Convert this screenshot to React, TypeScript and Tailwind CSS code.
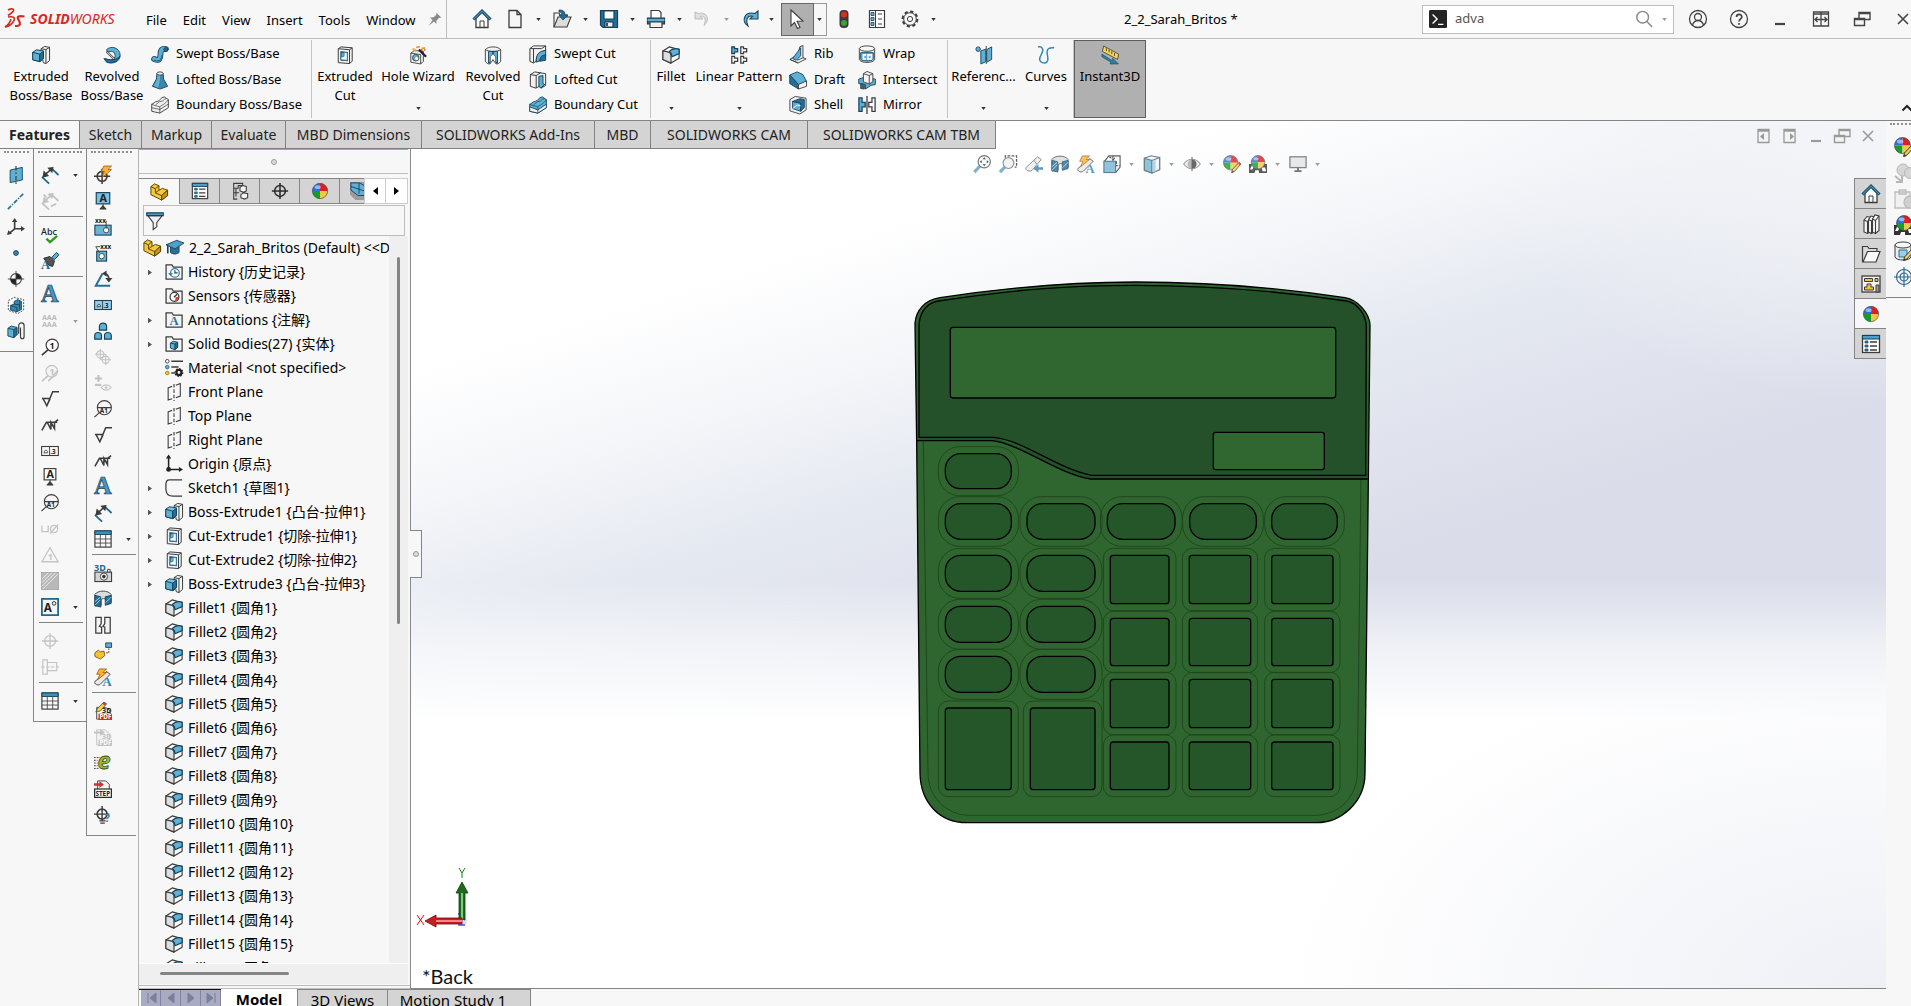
import type { ReactNode } from "react";

const K = "#3c3c3c";
const B = "#5fb0d3";
const D = "#236f97";
const G = "#c3c3c3";

const ball = (cx: number, cy: number, r: number) => (
  <g>
    <path d={`M${cx} ${cy}V${cy - r}A${r} ${r} 0 0 0 ${cx - r} ${cy}Z`} fill="#2c6fe0" />
    <path d={`M${cx} ${cy}H${cx + r}A${r} ${r} 0 0 0 ${cx} ${cy - r}Z`} fill="#dd1f1f" />
    <path d={`M${cx} ${cy}V${cy + r}A${r} ${r} 0 0 1 ${cx - r} ${cy}Z`} fill="#12a02a" />
    <path d={`M${cx} ${cy}H${cx + r}A${r} ${r} 0 0 1 ${cx} ${cy + r}Z`} fill="#efc945" />
    <circle cx={cx} cy={cy} r={r} fill="none" stroke="#444" strokeWidth="0.7" />
    <ellipse cx={cx - r * 0.3} cy={cy - r * 0.5} rx={r * 0.4} ry={r * 0.25} fill="#fff" opacity="0.5" />
  </g>
);

const pencil = (
  <g>
    <path d="M18 8l2 2-7 8-3.500 1.500 1-3.500z" fill="#f5cf45" stroke={K} strokeWidth="1" />
    <path d="M18 8l2 2-1.500 1.800-2-2z" fill="#d33" />
    <path d="M10.500 17l-1 3 3-1z" fill={K} />
  </g>
);

const folder = <path d="M1.200 18V2h6.500l1.500 2.500H19V18z" fill="#f4f4f4" stroke={K} strokeWidth="1.400" />;

const icons: Record<string, ReactNode> = {
  extrude: (
    <g stroke={K} strokeWidth="1.100">
      <path d="M10 3l4-2.500 5.500 1v14.500l-4 3.500-3-1z" fill="#f6f6f6" />
      <path d="M15.500 4v15.500M10 3l5.500 1 4-2.500" fill="none" />
      <path d="M.8 7l4-2.800 8 1.300v8L9 17.500l-8.200-2.200z" fill="#7cc3e2" stroke="#15445f" />
      <path d="M.8 7L8.500 9v8.300l-7.700-2z" fill={B} stroke="#15445f" />
      <path d="M8.500 9l4.300-3.300v8l-4.300 3.600z" fill={D} stroke="#15445f" />
    </g>
  ),
  revolve: (
    <g stroke="#15445f" strokeWidth="1">
      <path d="M4 4c5-5 15-2 15 6s-8 10-14 8l-2-4c5 3 11 1 10.500-3.500S9 5 5 7z" fill={B} />
      <path d="M1 14l3 4c6 2 12 0 15-7-4 5-11 5-18 3z" fill={D} />
      <path d="M4 6l9 9" stroke={K} strokeWidth="2.400" />
      <path d="M4.500 6.500l8 8" stroke="#fff" strokeWidth="1" />
    </g>
  ),
  sweep: (
    <g fill="none" strokeLinecap="round">
      <path d="M3.500 15.500c6 3 7-1 7-5s1-7 6-6" stroke="#15445f" strokeWidth="6.500" />
      <path d="M3.500 15.500c6 3 7-1 7-5s1-7 6-6" stroke={B} strokeWidth="4.500" />
      <path d="M4 17c5 2 8 0 8-5" stroke={D} strokeWidth="1.600" />
      <circle cx="16.500" cy="5" r="2.200" fill={D} stroke="#15445f" />
    </g>
  ),
  loft: (
    <g stroke={K}>
      <path d="M6.500 3L6 9l-4.500 8 8.500 3 8.500-3L14 9l-.5-6z" fill="#3c86ad" stroke="#15445f" />
      <path d="M7.200 4l-.5 5.500L3 16.500l5 2 2-9V4z" fill={B} stroke="none" />
      <ellipse cx="10" cy="2.800" rx="3.500" ry="1.800" fill="#f2f2f2" />
    </g>
  ),
  boundary: (
    <g stroke={K} fill="#f0f0f0">
      <path d="M.8 9c2 0 3-3 6-3s4-5 8-5l4.500 3v9l-9.500 6-9-2z" />
      <path d="M.8 9c3 2 6 2 9 3 2-2 5-2 9.500-8M9.800 12v7M5 10c2-1 3-4 6-4s3-3 6-3M.8 13l9 2 9.500-6" fill="none" strokeWidth="0.8" />
    </g>
  ),
  boundarycut: (
    <g stroke="#15445f" fill={B}>
      <path d="M.8 9c2 0 3-3 6-3s4-5 8-5l4.500 3v9l-9.500 6-9-2z" />
      <path d="M.8 12l9 3.500 9.500-6.500v4l-9.500 6-9-2z" fill="#f2f2f2" />
      <path d="M.8 9c3 2 6 2 9 3 2-2 5-2 9.500-8M9.800 12v7M5 10c2-1 3-4 6-4s3-3 6-3" fill="none" strokeWidth="0.8" />
    </g>
  ),
  cut: (
    <g stroke={K} strokeWidth="1.100">
      <path d="M2.500 3l3-2 12.500 1v15l-3 2.500-12.500-1z" fill="#f2f2f2" />
      <path d="M2.500 3L15 4.200V19.500M15 4.200l3-2.200" fill="none" />
      <path d="M5.500 6.500l7 .7v9l-7-.7z" fill={B} stroke="#15445f" strokeWidth="1.300" />
      <path d="M5.500 12.500l3.500-1V7.200l3.500.3v8.500l-7-.8z" fill="#f8f8f8" stroke={D} strokeWidth="0.8" />
    </g>
  ),
  hole: (
    <g stroke={K}>
      <path d="M2 8l4-3 10 1v11l-3 3-11-2z" fill="#f2f2f2" />
      <path d="M2 8l11 1.500V20" fill="none" />
      <circle cx="7.500" cy="13" r="3.600" fill={B} />
      <circle cx="8.500" cy="14" r="1.700" fill="#fff" stroke="none" />
      <path d="M11 4l8 8" stroke="#222" strokeWidth="2.500" />
      <path d="M8 2l2-1M14 3l4-1M4 3l2 1M11 0v2M6 6l2-2" stroke="#e8a021" strokeWidth="2" />
      <path d="M13 4l2 1M17 5l1-1" stroke="#d33" strokeWidth="1.500" />
    </g>
  ),
  revcut: (
    <g stroke={K}>
      <path d="M1.500 4c3-4 14-4 17 0v13c-2 3-4 3-5 3V12L10 8l-3.500 4v8c-2 0-4-1-5-3z" fill="#f2f2f2" />
      <path d="M1.500 4c2 1.500 5 2 8.500 2s6.500-.5 8.500-2" fill="none" />
      <path d="M5 6v13l5-3V6zM15 6v13l-5-3V6z" fill={B} stroke="#15445f" />
      <path d="M7 19.500V12l3-3.500 3 3.500v7.500L10 15z" fill="#fff" strokeWidth="0.800" />
    </g>
  ),
  sweepcut: (
    <g stroke={K} strokeWidth="1.100">
      <path d="M1 4l4-3h13.500v5.500C11 7 8 12 8 18l-3 2-4-2z" fill="#f2f2f2" />
      <path d="M1 4h13M5 4v15.500M14 4l4.500-3" fill="none" />
      <path d="M8 19c0-8 2-12 10.500-13v6c-4 1-5 3-5 5z" fill={B} stroke="#15445f" />
      <path d="M12 18c0-4 2-7 6.500-7v6z" fill={D} stroke="#15445f" />
    </g>
  ),
  loftcut: (
    <g stroke={K} strokeWidth="1.100">
      <path d="M1.500 4l5-3 12 2v13l-5 3-2-2-4 2-6-2z" fill="#f2f2f2" />
      <path d="M1.500 4L8 5v14M8 5l5-3" fill="none" />
      <path d="M11 6l4.500-1v9l2 1-4.500 4-2-2z" fill={B} stroke="#15445f" />
    </g>
  ),
  fillet: (
    <g stroke={K} strokeWidth="1.300" strokeLinejoin="round">
      <path d="M1 5.500L8 1l11 3v9.500L10 19l-9-4z" fill="#fafafa" />
      <path d="M10 19v-8.500c0-3-2-4-9-5V15z" fill="#dedede" />
      <path d="M8 6c3-3 6-4 11-2.500v5L11 12c0-3-1-5-3-6z" fill={B} stroke="#15445f" />
    </g>
  ),
  pattern: (
    <g strokeWidth="1.400" stroke={K} fill="#fff">
      <path d="M2 1h3v2h3.500v3.500H5v2H2z" fill={B} stroke="#15445f" />
      <path d="M12 1h3v2h3.500v3.500H15v2h-3zM2 11.500h3v2h3.500V17H5v2H2zM12 11.500h3v2h3.500V17H15v2h-3z" />
    </g>
  ),
  rib: (
    <g stroke={K}>
      <path d="M12 2l3.500-1.500V14l3.500 1.500-9 4.500-9-4 3-2 6-3z" fill="#f2f2f2" />
      <path d="M4 15L13 3v9l-5 5z" fill={B} stroke="#15445f" />
      <path d="M1 16l9 4M9 17l7-3" fill="none" />
    </g>
  ),
  draft: (
    <g stroke="#15445f">
      <path d="M.8 4.500L9 1l6.500 3L19.500 12l-9 3z" fill={B} />
      <path d="M.8 4.500L10.500 15v5L.8 14z" fill={D} />
      <path d="M10.500 15l9-4v6l-9 3z" fill="#f2f2f2" stroke={K} />
    </g>
  ),
  shell: (
    <g stroke={K}>
      <path d="M1 4l6-3.500 12 2v13L12 20 1 16.500z" fill="#f2f2f2" />
      <path d="M4 6l9 2v9l-9-3z" fill={B} stroke="#15445f" />
      <path d="M4 6l8-3 5 1v9l-4 4V8z" fill={D} stroke="#15445f" />
      <path d="M4 14l5-4 4 1" fill="none" stroke="#fff" />
    </g>
  ),
  wrap: (
    <g stroke={K}>
      <path d="M1.500 4v12c1 4.500 16 4.500 17 0V4" fill="#f2f2f2" />
      <ellipse cx="10" cy="4" rx="8.500" ry="3" fill="#f7f7f7" />
      <path d="M3 8.500h14V16c-3 2.500-11 2.500-14 0z" fill={B} stroke="#15445f" />
      <path d="M9 11H6v4.500h3M11 11h4v4.500h-4z" fill="none" stroke="#fff" strokeWidth="1.800" />
    </g>
  ),
  intersect: (
    <g stroke={K}>
      <path d="M.8 9l6-2 12.500 2v6l-5 1-6 4v-5l-7.500-1z" fill={B} stroke="#15445f" />
      <path d="M6 3l4-2.500L16.500 3v9l-4 2.500L6 12z" fill="#f4f4f4" />
      <path d="M6 3l6.500 2v9.500M12.500 5l4-2" fill="none" />
      <path d="M3 19.500V14l4 1v5z" fill={D} />
    </g>
  ),
  mirror: (
    <g strokeWidth="1.400">
      <path d="M1 2h3.500v5h3.500v5H4.500v5H1z" fill={B} stroke="#15445f" />
      <path d="M19 2h-3.500v5H12v5h3.500v5H19z" fill="#fff" stroke={K} />
      <path d="M10 0v20" stroke={K} />
    </g>
  ),
  refgeo: (
    <g stroke="#15445f">
      <circle cx="3.500" cy="3.500" r="2.500" fill={B} />
      <path d="M6.500 5.500l5.500-2v14l-5.500 2.500zM13 4l5.500-3v14L13 18z" fill={B} />
      <path d="M12.500 0v20" stroke={K} strokeDasharray="4 2" />
    </g>
  ),
  curves: (
    <path d="M1 1c5-1 7 3 4 8s-3 8 1 9.500 7-1 6-6S9 1 19 2" fill="none" stroke="#2f86b0" strokeWidth="1.600" />
  ),
  instant: (
    <g>
      <path d="M3 0l16.500 9-1 6L1.500 6z" fill="#f7d654" stroke={K} strokeWidth="0.900" />
      <path d="M6 2.500v3M9 4v3M12 6v3M15 8v3" stroke={K} />
      <path d="M1 9l11 7 1-2.500 6.500 6.500H10l1-2L1 12z" fill="#2c7ba5" stroke="#15445f" strokeWidth="0.600" />
    </g>
  ),
  home: (
    <g>
      <path d="M4 9v9.500h12V9l-6-6z" fill="#fafafa" stroke={K} strokeWidth="1.300" />
      <path d="M8 18v-6h4v6" fill="none" stroke={K} />
      <path d="M1.500 10.500L10 2l8.500 8.500" fill="none" stroke="#17415a" strokeWidth="3" />
      <path d="M1.500 10.500L10 2l8.500 8.500" fill="none" stroke="#3c92bf" strokeWidth="1.200" />
    </g>
  ),
  newdoc: <path d="M4 1.500h8l4 4v13H4zM12 1.500v4h4" fill="#f6f6f6" stroke={K} strokeWidth="1.300" />,
  open: (
    <g stroke={K} strokeWidth="1.100">
      <path d="M2 18V4h5l1 2h7v3" fill="#f6f6f6" />
      <path d="M2 18L6 8h13l-4 10z" fill="#dcdcdc" />
      <path d="M7 1c4 0 6 1 6 5h3l-5 5-4-5h3c0-2-1-3-3-3z" fill={D} stroke="#15445f" strokeWidth="0.800" />
    </g>
  ),
  save: (
    <g stroke="#17415a" strokeWidth="1.200">
      <path d="M1.500 1.500h17v17H4l-2.500-2.500z" fill={D} />
      <path d="M5 2h10v8H5z" fill="#fff" />
      <path d="M6 13h8v5H6z" fill="#f0f0f0" />
      <path d="M8 14v3" stroke={K} strokeWidth="1.800" />
    </g>
  ),
  print: (
    <g stroke={K} strokeWidth="1.200">
      <path d="M5 9V1.500h8l2 2V9" fill="#fff" />
      <path d="M1.500 9h17v6h-17z" fill={D} stroke="#17415a" />
      <path d="M4 13h12v5.500H4z" fill="#f0f0f0" />
      <path d="M1.500 11h17" stroke="#9ad0e8" />
    </g>
  ),
  undo: <path d="M2 3v7h8L7 7.500c4-1 7 2 4 9 6-5 4-14-6-12z" fill="#e0e0e0" stroke="#bdbdbd" />,
  redo: <path d="M18 2v8h-8l2.500-2.800C8 6 5 10 8 17 1 12 4 2 15 4.500z" fill={B} stroke="#15445f" strokeWidth="1.100" />,
  pointer: <path d="M4 1l12 11-6 .3 3 6-2.500 1.200-3-6L4 17z" fill="#fff" stroke={K} strokeWidth="1.100" />,
  light: (
    <g>
      <rect x="5.500" y="1" width="9" height="18" rx="4" fill="#3a3a3a" />
      <circle cx="10" cy="5.500" r="3" fill="#d8301e" />
      <circle cx="10" cy="14" r="3" fill="#3ea03a" />
    </g>
  ),
  list: (
    <g stroke={K}>
      <path d="M2.500 1.500h15v17h-15z" fill="#fff" strokeWidth="1.200" />
      <path d="M8.500 2v16M11 5h4M11 10h4M11 15h4" />
      <path d="M4 3.500h3v3H4zM4 8.500h3v3H4zM4 13.500h3v3H4z" fill={B} stroke="#15445f" strokeWidth="0.800" />
    </g>
  ),
  gear: (
    <g fill="none" stroke={K}>
      <circle cx="10" cy="10" r="7.400" strokeWidth="2" strokeDasharray="3.300 2.500" />
      <circle cx="10" cy="10" r="6.300" />
      <circle cx="10" cy="10" r="2.600" />
    </g>
  ),
  pin: <path d="M12 1l7 7-3.500.5-3.500 4V17l-3.500-3.500L1 19.500 6.500 11.500 3 8l5-.5L12 4z" fill="#8a8a8a" />,
  search: (
    <g fill="none" stroke="#8a8a8a" strokeWidth="1.600">
      <circle cx="8.500" cy="8" r="6.500" />
      <path d="M13 12.500l6 6.500" />
    </g>
  ),
  user: (
    <g fill="none" stroke="#444" strokeWidth="1.300">
      <circle cx="10" cy="10" r="8.500" />
      <circle cx="10" cy="8" r="3.500" />
      <path d="M4.500 16c1-3 3-4.500 5.500-4.500s4.500 1.500 5.500 4.500" />
    </g>
  ),
  help: (
    <g fill="none" stroke="#444" strokeWidth="1.300">
      <circle cx="10" cy="10" r="8.500" />
      <path d="M7.500 8c0-3.500 5.500-3.500 5.300 0 0 2-2.700 2-2.700 4.500M10 14v1.700" strokeWidth="1.700" />
    </g>
  ),
  min: <path d="M5 15h10" stroke="currentColor" strokeWidth="2.200" />,
  span: (
    <path
      d="M2.500 3h15v14h-15zM2.500 5h15M10 3v14M4 10.500h12M6.500 8L4 10.500 6.500 13M13.500 8l2.500 2.500-2.500 2.500"
      fill="none"
      stroke="currentColor"
      strokeWidth="1.300"
    />
  ),
  restore: (
    <path d="M7 9V3.500h11v7h-5M2.500 9.500h10v7h-10zM7 4.500h11M2.500 10.500h10" fill="none" stroke="currentColor" strokeWidth="1.400" />
  ),
  close: <path d="M5 5l10 10M15 5L5 15" stroke="currentColor" strokeWidth="1.600" />,
  prevdoc: (
    <g fill="none" stroke="currentColor" strokeWidth="1.300">
      <path d="M4 3.500h11v13H4zM4 5h11" />
      <path d="M10 7v7l-4-3.500z" fill="currentColor" stroke="none" />
    </g>
  ),
  nextdoc: (
    <g fill="none" stroke="currentColor" strokeWidth="1.300">
      <path d="M4 3.500h11v13H4zM4 5h11" />
      <path d="M10 7v7l4-3.500z" fill="currentColor" stroke="none" />
    </g>
  ),
  plane3: (
    <g stroke="#15445f">
      <path d="M3.500 4.500L17 1.500v14l-13.500 3z" fill={B} />
      <path d="M10 0v20" stroke={K} strokeWidth="1.300" strokeDasharray="5 2 2 2" />
    </g>
  ),
  axis: <path d="M1 19L19 1" stroke={D} strokeWidth="1.800" strokeDasharray="5 1.500 1.500 1.500" />,
  coord: (
    <g stroke={K} fill="none" strokeWidth="1.800">
      <path d="M8.500 12V3M8.500 12h9M8.500 12l-6 5" />
      <path d="M8.500 0l3 4.500h-6zM20 12l-4.500-3v6zM0 19l1.500-5.500 4 4z" fill={K} stroke="none" />
    </g>
  ),
  point: <circle cx="10" cy="10" r="2.700" fill="#3b85ad" stroke="#17415a" />,
  com: (
    <g>
      <circle cx="10" cy="10" r="6" fill="#fff" stroke={K} strokeWidth="1.200" />
      <path d="M10 10V4a6 6 0 0 1 6 6zM10 10v6a6 6 0 0 1-6-6z" fill="#222" />
      <path d="M10 1v18M1 10h18" stroke={K} />
    </g>
  ),
  bbox: (
    <g>
      <path d="M1.500 5L8 1.500l10.500 2.500v11.500L12 19.500 1.500 16z" fill="none" stroke={K} strokeDasharray="2 1.500" />
      <path d="M4 10.500l4-1.500V6l4-2 4 2v9l-5 2.500L4 15.500z" fill="#3c86ad" stroke="#15445f" />
      <path d="M4 10.500l7 2.500v4M8 9l6 1M14 6v9" stroke="#15445f" fill="none" />
    </g>
  ),
  mate: (
    <g stroke="#15445f">
      <path d="M1 7l3.500-2.500L11 6v8l-3.500 3.500-6.500-2z" fill={B} />
      <path d="M7.500 8.500L11 6v8l-3.500 3.500z" fill={D} />
      <path d="M1 7l6.500 1.500" />
      <path d="M13 13V4c0-4 6-4 6 0v12c0 3.500-4 3.500-4 0V6" fill="none" stroke={K} strokeWidth="1.300" />
    </g>
  ),
  dim: (
    <g stroke="#1f6a94" fill="none" strokeWidth="2">
      <path d="M1 12l8 7.500M11 2l8.500 8" />
      <path d="M4 10l7-6" stroke={K} strokeWidth="1.800" />
      <path d="M1.500 13l1.500-8 6 6zM14 1L7 2l5.500 6z" fill={K} stroke="none" />
    </g>
  ),
  dimgray: (
    <g stroke={G} fill="none" strokeWidth="2">
      <path d="M1 12l8 7.500M11 2l8.500 8M4 10l7-6M3 3l3 3M17 13l-6 3" />
      <path d="M1.500 13l1.500-8 6 6zM14 1L7 2l5.500 6z" fill={G} stroke="none" />
    </g>
  ),
  spell: (
    <g>
      <text x="0" y="10" fontSize="10" fontWeight="500" fill="#222">Abc</text>
      <path d="M6 14l4 4 8-7" fill="none" stroke="#2c9b1d" strokeWidth="2.600" />
    </g>
  ),
  brush: (
    <g>
      <path d="M12 6l5-5.500 3 2.500-5 5.500z" fill={B} stroke="#15445f" />
      <path d="M3 7l7-2 5 5-2 6-4-1z" fill="#555" stroke="#222" />
      <text x="0" y="19" fontSize="14" fontWeight="700" fill="#1f6a94" fontFamily="Liberation Serif">A</text>
    </g>
  ),
  noteA: (
    <text x="0" y="18" fontSize="27" fontWeight="700" fill="#4a97c2" stroke="#17415a" strokeWidth="0.800" fontFamily="Liberation Serif">A</text>
  ),
  aaa: (
    <g fill="#bdbdbd" fontSize="8" fontWeight="700">
      <text x="1" y="9">AAA</text>
      <text x="1" y="17">AAA</text>
    </g>
  ),
  balloon: (
    <g>
      <circle cx="12.500" cy="8" r="6.800" fill="#fff" stroke={K} strokeWidth="1.300" />
      <path d="M8 13l-7 6" stroke={K} strokeWidth="1.900" />
      <text x="9.500" y="12" fontSize="10" fontWeight="700" fill="#222">1</text>
    </g>
  ),
  balloongray: (
    <g>
      <circle cx="12" cy="8" r="6.500" fill="#f3f3f3" stroke={G} strokeWidth="1.300" />
      <path d="M8 13l-7 6M13 14l5-6M8 19l5-5" stroke={G} strokeWidth="1.800" />
      <text x="9.500" y="12" fontSize="10" fontWeight="700" fill={G}>1</text>
    </g>
  ),
  finish: <path d="M1 9.500h9M2.500 10l4 7.500L13 2h7M6.500 17.500L10 10" fill="none" stroke={K} strokeWidth="1.700" />,
  weld: <path d="M1 16l5-9h12M7 7l4 8V7l4 7V7M14 8l5-4" fill="none" stroke={K} strokeWidth="1.700" />,
  gtol: (
    <g>
      <rect x="0.700" y="5" width="18.600" height="10" fill="#f6f6f6" stroke={K} strokeWidth="1.200" />
      <path d="M9.500 5v10M3 12h4.500M3.500 11.500c0-3 4-3 4 0" stroke={K} fill="none" />
      <text x="10.200" y="13" fontSize="7" fontWeight="700" fill="#222">.3</text>
    </g>
  ),
  gtolblue: (
    <g>
      <rect x="0.700" y="5" width="18.600" height="10" fill="#9bd0e8" stroke="#17415a" strokeWidth="1.200" />
      <path d="M9.500 5v10M3 12h4.500M3.500 11.500c0-3 4-3 4 0" stroke={K} fill="none" />
      <text x="10.200" y="13" fontSize="7" fontWeight="700" fill="#222">.3</text>
    </g>
  ),
  datum: (
    <g>
      <rect x="3.500" y="0.700" width="13" height="12.500" fill="#fff" stroke={K} strokeWidth="1.300" />
      <text x="6" y="11" fontSize="12" fontWeight="700" fill="#222">A</text>
      <path d="M10 13v4M6.500 19h7L10 15z" fill={K} stroke={K} />
    </g>
  ),
  datumblue: (
    <g>
      <rect x="2.500" y="0.700" width="15" height="12.500" fill="#7cc0de" stroke="#17415a" strokeWidth="1.300" />
      <text x="6" y="11" fontSize="12" fontWeight="700" fill="#222">A</text>
      <path d="M10 13v4M6.500 19h7L10 15z" fill={K} stroke={K} />
    </g>
  ),
  target: (
    <g>
      <circle cx="11.500" cy="8.500" r="7.800" fill="#f6f6f6" stroke={K} strokeWidth="1.200" />
      <path d="M4 8.500h15M6 14l-5.500 5" stroke={K} strokeWidth="1.300" />
      <text x="6.500" y="14.500" fontSize="7" fontWeight="700" fill="#222">A1</text>
    </g>
  ),
  hole2: (
    <g fill="none" stroke={G} strokeWidth="1.400">
      <path d="M1 6v7h7V6" />
      <circle cx="14.500" cy="10" r="4" />
      <path d="M10 15l9-10" />
    </g>
  ),
  rev: (
    <g fill="none" stroke={G} strokeWidth="1.400">
      <path d="M10 2l9 15.500H1z" />
      <text x="7.500" y="15.500" fontSize="10" fontWeight="700" fill={G} stroke="none">1</text>
    </g>
  ),
  hatch: (
    <g>
      <rect x="0.500" y="0.500" width="19" height="19" fill="#b9b9b9" stroke="#a9a9a9" />
      <path d="M1 12L12 1M1 16L16 1M1 8l7-7M2 19L19 2" stroke="#ededed" />
    </g>
  ),
  block: (
    <g>
      <rect x="1" y="1" width="18" height="18" fill="#f4f4f4" stroke="#1f6a94" strokeWidth="2" />
      <text x="3" y="15.500" fontSize="13" fontWeight="700" fill="#222">A</text>
      <circle cx="14.500" cy="6" r="2" fill="none" stroke="#222" />
    </g>
  ),
  center: (
    <g fill="none" stroke={G} strokeWidth="1.400">
      <circle cx="10" cy="10" r="6" />
      <path d="M10 1v18M1 10h18" />
    </g>
  ),
  cline: (
    <g fill="none" stroke={G} strokeWidth="1.300">
      <path d="M2 2h5v16H2zM7 5h10.500v9H7z" />
      <path d="M0 10h20" strokeDasharray="4 1.500" />
    </g>
  ),
  table: (
    <g>
      <rect x="1" y="1" width="18" height="18" fill="#f8f8f8" stroke={K} strokeWidth="1.300" />
      <path d="M1 1h18v4H1z" fill="#3b8fbb" stroke="#17415a" />
      <path d="M1 10h18M1 14.500h18M7 5v14M13 5v14" stroke={K} strokeWidth="0.900" />
    </g>
  ),
  autodim: (
    <g>
      <circle cx="9" cy="11.500" r="5.500" fill="none" stroke={K} strokeWidth="1.800" />
      <path d="M9 3v17M0 11.500h18" stroke={K} strokeWidth="1.700" />
      <path d="M11 0h8.500l-4 4h4L9 13l2.500-7H8z" fill="#f7b52d" stroke="#9a4b10" strokeWidth="0.800" />
    </g>
  ),
  sizedim: (
    <g>
      <text x="1" y="5" fontSize="7" fontWeight="700" fill="#222">xxx</text>
      <rect x="1" y="8" width="18" height="11" fill="#6bb4d6" stroke="#17415a" strokeWidth="1.200" />
      <circle cx="13.500" cy="13.500" r="3" fill="#fff" stroke={K} />
      <path d="M13.500 12V3" stroke={K} fill="none" />
    </g>
  ),
  locdim: (
    <g>
      <text x="7" y="5" fontSize="7" fontWeight="700" fill="#222">xxx</text>
      <rect x="3" y="8" width="11" height="11" fill="#6bb4d6" stroke="#17415a" strokeWidth="1.200" />
      <circle cx="8.500" cy="13.500" r="3" fill="#fff" stroke={K} />
      <path d="M6 10L2 3h5" stroke={K} fill="none" />
    </g>
  ),
  angdim: (
    <g fill="none">
      <path d="M9.500 4L2 17.500h16" stroke={D} strokeWidth="2.200" />
      <path d="M11 4c4 0 5.500 3 5.500 7" stroke={K} strokeWidth="1.800" />
      <path d="M9 4l5-3.500v7zM16.500 14L12.500 9h8z" fill={K} />
    </g>
  ),
  patfeat: (
    <path
      d="M6 9V5c0-5 8-5 8 0v4zM.8 19v-4c0-4.500 7.500-4.500 7.500 0v4zM11.700 19v-4c0-4.500 7.500-4.500 7.500 0v4z"
      fill={B}
      stroke="#17415a"
      strokeWidth="1.300"
    />
  ),
  centgray: (
    <g fill="none" stroke={G} strokeWidth="1.200">
      <circle cx="7" cy="7" r="4" />
      <circle cx="13" cy="13" r="4" />
      <path d="M7 1v12M1 7h12M13 7v12M7 13h12" />
    </g>
  ),
  showtol: (
    <g fill="none" stroke={G} strokeWidth="2.400">
      <path d="M5 1v8M1 5h8M1 12h7" />
      <path d="M8 15c3-4 8-4 11 0-3 4-8 4-11 0z" strokeWidth="1.300" />
      <circle cx="13.500" cy="15" r="1.500" fill={G} stroke="none" />
    </g>
  ),
  cam3d: (
    <g>
      <text x="0" y="8" fontSize="10" fontWeight="700" fill="#1f6a94">3D</text>
      <rect x="1" y="9" width="18.500" height="10.500" fill="#d4d4d4" stroke={K} strokeWidth="1.200" />
      <path d="M15 6h3v3h-3z" fill="#eee" stroke={K} />
      <circle cx="11" cy="14" r="4" fill="#f4f4f4" stroke={K} />
      <circle cx="11" cy="14" r="2" fill="#333" />
    </g>
  ),
  section: (
    <g stroke="#17415a">
      <path d="M1 5c3-5 15-5 18 0v9l-5 1v-4c-2-2-5-2-6 0v6l-7 1z" fill="#d9dde0" stroke={K} />
      <path d="M1 6l6.500 1.500v11.500L1 17zM12.500 7.500L19 6v9l-6.500 2z" fill={D} />
      <path d="M1 13l6-5M1 17l6-6M13 14l6-6" stroke="#a8d7ec" />
    </g>
  ),
  breakv: (
    <path d="M2 1.500h6v7l-2 3 2.500 1V19H2zM18 1.500h-6v7l-2 3 2 1V19h6z" fill="#f4f4f4" stroke={K} strokeWidth="1.400" />
  ),
  modelitem: (
    <g>
      <path d="M1 12l4-3 2 2 4-1 1 5-5 4-6-3z" fill="#f2c230" stroke="#7a5a10" />
      <path d="M13 1h6.500v5H13z" fill={B} stroke="#17415a" />
      <path d="M16.500 7v5h-4" stroke={K} fill="none" strokeDasharray="2 1" />
    </g>
  ),
  annview: (
    <g>
      <path d="M1 15L14 4l4 3L7 18c-3 2-7 0-6-3z" fill="#e8e8e8" stroke={K} />
      <path d="M6 1h8l-4 4h4L4 13l2.500-6H3z" fill="#f7b52d" stroke="#9a4b10" strokeWidth="0.800" />
      <text x="9.500" y="19.500" fontSize="14" fontWeight="700" fill="#2f86b0" fontFamily="Liberation Serif">A</text>
    </g>
  ),
  pdf: (
    <g>
      <path d="M3 6h10l5 4v9H3z" fill="#f6f6f6" stroke={K} />
      <text x="9" y="12" fontSize="8" fontWeight="700" fill="#222">3D</text>
      <path d="M2 11l2-4 7-7 3 2-7 8z" fill="#f5cf45" stroke={K} strokeWidth="0.800" />
      <path d="M11 0l3 2-2 2-3-2z" fill="#d33" />
      <rect x="5" y="13" width="15" height="7" fill="#e32219" />
      <text x="6" y="19" fontSize="7" fontWeight="700" fill="#fff">PDF</text>
    </g>
  ),
  pdfgray: (
    <g>
      <path d="M3 2h9l5 4v13H3z" fill="#f2f2f2" stroke={G} />
      <path d="M0 4h7V1l5 4-5 4V6H0z" fill={G} />
      <text x="9" y="12" fontSize="8" fontWeight="700" fill={G}>3D</text>
      <rect x="5" y="13" width="15" height="7" fill={G} />
      <text x="6" y="19" fontSize="7" fontWeight="700" fill="#fff">PDF</text>
    </g>
  ),
  edraw: (
    <g>
      <path d="M0 4h7M0 7h4M0 10h4M0 13h4M0 16h6" stroke={K} strokeDasharray="2 1" />
      <text x="4" y="17" fontSize="26" fontWeight="700" fontStyle="italic" fill="#9cb93a" stroke="#3e5212" strokeWidth="0.900">e</text>
    </g>
  ),
  step: (
    <g>
      <path d="M4 1h9l4 4v6H4z" fill="#f6f6f6" stroke={K} />
      <path d="M0 3.500h6V1l5 4-5 4V6.500H0z" fill="#d23030" />
      <rect x="0.700" y="10" width="18.600" height="9.300" fill="#f8f8f8" stroke="#222" strokeWidth="1.300" />
      <text x="1.700" y="17.300" fontSize="7" fontWeight="700" fill="#222">STEP</text>
    </g>
  ),
  dimhelp: (
    <g>
      <circle cx="9" cy="9" r="5.500" fill="none" stroke={K} strokeWidth="1.800" />
      <path d="M9 0v16M0 9h17M6 16.500h7M7 19h5" stroke={K} strokeWidth="1.600" />
      <text x="12" y="18" fontSize="12" fontWeight="700" fill="#2f86b0">?</text>
    </g>
  ),
  part: (
    <g stroke="#5c4508" strokeWidth="1.100" strokeLinejoin="round">
      <path d="M1 4l4-3 5 2v5l4-2 5.500 2v6L13 19 1 13z" fill="#f4c838" />
      <path d="M1 4l5 2.500V11l7 3v5M6 6.500L10 3M13 14l6.500-6M6 11l4-3" fill="none" />
      <path d="M13 14l6.500-6v6L13 19z" fill="#c8941a" />
    </g>
  ),
  cap: (
    <g stroke="#17415a">
      <path d="M5 8v7c3 2.500 7 2 9.500 0V8z" fill="#2c6f97" />
      <path d="M0 6.500L12 1.500l8 3L10 11z" fill="#4fa0c8" />
      <path d="M2 7v9" strokeWidth="1.800" />
    </g>
  ),
  props: (
    <g>
      <rect x="1.500" y="1.500" width="17" height="17" fill="#fff" stroke={K} strokeWidth="1.300" />
      <path d="M1.500 1.500h17v3.500h-17z" fill="#4ba0ca" stroke="#17415a" />
      <path d="M9 8h7M9 12h7M9 16h7" stroke={K} strokeWidth="1.300" />
      <path d="M4 7h3v2H4zM4 11h3v2H4zM4 15h3v2H4z" fill="#2f86b0" stroke="#17415a" strokeWidth="0.700" />
    </g>
  ),
  config: (
    <g stroke={K} fill="#f4f4f4" strokeWidth="1.200">
      <path d="M3 1.500h10V4H8v3H3zM3 7v12h4M3 12h6M5.500 7v9" fill="none" />
      <path d="M10 6l3-2 4 1v5l-3 1.500-4-1.500zM11 14l3-2 4.500 1v4.500L15 19l-4-1.500z" />
    </g>
  ),
  crosshair: (
    <g fill="none" stroke="#2b2b2b" strokeWidth="1.700">
      <circle cx="10" cy="10" r="6" />
      <path d="M10 1v18M1 10h18" />
    </g>
  ),
  ball: ball(10, 10, 8.500),
  cubeblue: (
    <g stroke="#17415a">
      <path d="M0 0h20v20H6L0 14z" fill="#9b9b9b" stroke="none" />
      <path d="M1 1h10l8 5v9H9L1 9z" fill={B} />
      <path d="M10 1v12M1 5l18 6" />
    </g>
  ),
  funnel: (
    <g stroke={K} strokeWidth="1.200">
      <path d="M2 4l6 8v7.500l4-3V12l6-8z" fill="#f0f0f0" />
      <path d="M.8 1h18.400v3H.8z" fill="#4ba0ca" stroke="#17415a" />
    </g>
  ),
  fhist: (
    <g>
      {folder}
      <circle cx="11" cy="11" r="4.800" fill="#fff" stroke="#2f86b0" strokeWidth="1.400" />
      <path d="M11 8v3h3" stroke={K} fill="none" strokeWidth="1.300" />
      <path d="M3.500 11h5.500L6 14.500z" fill="#2f86b0" />
    </g>
  ),
  fsens: (
    <g>
      {folder}
      <circle cx="10.500" cy="11" r="4.900" fill="#fff" stroke={K} strokeWidth="1.400" />
      <path d="M10 11.500l3.500-3.500" stroke={K} strokeWidth="1.600" />
      <path d="M11 15.500a4.500 4.500 0 0 0 4-4.500h-3z" fill="#e2401c" />
    </g>
  ),
  fann: (
    <g>
      {folder}
      <text x="5" y="16" fontSize="14" fontWeight="700" fill="#2f6f97" fontFamily="Liberation Serif">A</text>
    </g>
  ),
  fsolid: (
    <g>
      {folder}
      <path d="M6 9l3-2 5 1v5.500l-3 3-5-2z" fill="#5fb0d3" stroke="#17415a" />
      <path d="M11 10l3-2v5.500l-3 3z" fill="#236f97" stroke="#17415a" />
      <path d="M6 9l5 1" fill="none" stroke="#17415a" />
    </g>
  ),
  material: (
    <g>
      <path d="M7 2.500h13M7 9h8M7 15.500h4" stroke={K} strokeWidth="1.700" />
      <circle cx="2.500" cy="2.500" r="2" fill="#fff" stroke={K} />
      <circle cx="2.500" cy="9" r="2" fill={B} stroke={D} />
      <circle cx="2.500" cy="15.500" r="2" fill="#f2c230" stroke="#a9801a" />
      <circle cx="15.500" cy="15" r="2.800" fill="none" stroke="#222" strokeWidth="2.500" />
      <circle cx="15.500" cy="15" r="4.300" fill="none" stroke="#222" strokeWidth="1.300" strokeDasharray="1.800 1.500" />
    </g>
  ),
  plane: (
    <g fill="none" stroke={K} strokeWidth="1.200">
      <path d="M8 3.500l-4.500 2v13.500l4.500-1.500M12 2.500l5-2v14l-5 2" />
      <path d="M10 1v19" strokeDasharray="4 2" />
    </g>
  ),
  origin: (
    <g stroke="#222" strokeWidth="1.700" fill="none">
      <path d="M4 3v13h13" />
      <path d="M4-.5L7 4H1zM20 16l-4.500-2.800v5.600z" fill="#222" stroke="none" />
      <circle cx="4" cy="16" r="1.800" fill="#222" />
    </g>
  ),
  sketch: <path d="M19 1H5C2 1 1 3 1 6v5c0 5 3 8 8 8h10" fill="none" stroke={K} strokeWidth="1.400" />,
  zoomfit: (
    <g>
      <path d="M8 12l-6.500 7" stroke="#5d9fc0" strokeWidth="3.500" />
      <circle cx="12.500" cy="7.500" r="6.800" fill="#f6f8fa" stroke="#555" strokeWidth="1.300" />
      <path d="M12.500 2.500l1.800 2.200h-3.600zM12.500 12.500l1.800-2.200h-3.600zM7.500 7.500l2.200-1.800v3.600zM17.500 7.500l-2.200-1.800v3.600z" fill="#222" />
    </g>
  ),
  zoomarea: (
    <g>
      <path d="M7 3V1h12.500v12.500h-2" fill="none" stroke="#333" strokeWidth="1.400" strokeDasharray="3 1.500" />
      <path d="M7 13l-6 6" stroke="#5d9fc0" strokeWidth="3.500" />
      <circle cx="10.500" cy="9" r="6" fill="#eef2f4" stroke="#777" strokeWidth="1.300" />
    </g>
  ),
  prevview: (
    <g>
      <path d="M1 14L14 2l4 3L8 17c-3 2-8 0-7-3z" fill="#ececec" stroke="#666" />
      <path d="M10 6l3 4" stroke="#666" />
      <path d="M20 13.500h-5v-3L9 15l6 4.500v-3h5z" fill="#3a82a8" />
    </g>
  ),
  orient: (
    <g stroke="#333" strokeWidth="1.200">
      <path d="M1.500 7l5-6h12.500v12.500l-5 6" fill="#f8f8f8" />
      <path d="M11 1v6M15 7v5h4M13 3l-2 3M7 2l4 3" fill="none" strokeDasharray="3 1" />
      <rect x="1" y="7" width="13" height="12.500" fill="#76b5d3" stroke="#2b5f7a" />
    </g>
  ),
  display: (
    <g stroke="#3f5f6e" strokeWidth="1.200">
      <path d="M1.500 3.500L9 .8l9.500 2v13.500L10 20l-8.500-3z" fill="#f3f6f8" />
      <path d="M1.500 3.500L10 6v14l-8.500-3z" fill="#76b5d3" />
      <path d="M10 6l8.500-3.200v13.500L10 20z" fill="#f0f4f6" />
      <path d="M10.600 6.500l3.400-1.500v13l-3.400 1.300z" fill="#9bcbe0" stroke="none" />
    </g>
  ),
  eye: (
    <g>
      <path d="M.8 10c5-7 13.400-7 18.400 0-5 7-13.400 7-18.400 0z" fill="#eee" stroke="#888" strokeWidth="1.300" />
      <circle cx="10" cy="10" r="5" fill="#aaa" />
      <path d="M10 5a5 5 0 0 1 0 10z" fill="#444" />
      <path d="M10 2v16" stroke="#444" />
    </g>
  ),
  appear: (
    <g>
      {ball(8.500, 8.500, 8)}
      {pencil}
    </g>
  ),
  scene: (
    <g>
      <path d="M0 10h20v10H0z" fill="#333" />
      <path d="M3 12h3l-2 4H1zM14 14h4l1 4h-4zM7 17h4v3H6z" fill="#fff" />
      {ball(10, 8, 7.500)}
    </g>
  ),
  monitor: (
    <g>
      <rect x="1" y="2" width="18" height="12" fill="#e4e4e4" stroke="#666" strokeWidth="1.400" />
      <path d="M10 14v3.500M6 18h8" stroke="#555" strokeWidth="2" />
    </g>
  ),
  library: (
    <g stroke={K} fill="#f8f8f8" strokeWidth="1.100">
      <path d="M3 6l3-3.500 4 1v14l-3.500 2L3 18z" />
      <path d="M6.500 19.500V7.500L3 6M6.500 7.500L10 3.500" fill="none" />
      <path d="M7.500 5.500L10 2l4 1v14l-3.500 2.500-3-1.500z" />
      <path d="M10.500 19.500V7l-3-1.500M10.500 7L14 3" fill="none" />
      <path d="M11.500 5L14 1l4 1v14.500L14.500 19.500l-3-1.500z" />
      <path d="M14.500 19.500V6.500l-3-1.500M14.500 6.500L18 2" fill="none" />
    </g>
  ),
  folderbig: (
    <g stroke={K} strokeWidth="1.200">
      <path d="M1.500 18V2.500h5l1.500 2h8v4" fill="#d9d9d9" />
      <path d="M2 18L6.500 7.500H19L15 18z" fill="#fafafa" />
    </g>
  ),
  palette: (
    <g stroke={K}>
      <rect x="1" y="2" width="18" height="16" fill="#f4f4f4" strokeWidth="1.300" />
      <path d="M3.500 4.500h8v3h-8zM14 4.500h3v3h-3zM6 10h4v3h2.500v3h-9v-3H6z" fill="#f2c230" />
      <path d="M15 11h3v7h-3z" fill="#999" />
    </g>
  ),
  ballgray: (
    <g fill="#d6d6d6" stroke="#b8b8b8">
      <circle cx="9" cy="7" r="6" />
      <circle cx="16" cy="10" r="5.500" />
      <path d="M1 13l6 5M8 13v6H2" strokeWidth="2" fill="none" />
    </g>
  ),
  clipgray: (
    <g fill="#f0f0f0" stroke="#bdbdbd" strokeWidth="1.300">
      <path d="M1 3h15v16H1zM5 1h7v4H5z" />
      <circle cx="16" cy="13" r="6" fill="#d0d0d0" />
    </g>
  ),
  dbedit: (
    <g>
      <path d="M1 4v12c1 4 15 4 16 0V4" fill="#ececec" stroke={K} />
      <ellipse cx="9" cy="4" rx="8" ry="3" fill="#fafafa" stroke={K} />
      <path d="M5 9h8v7H5z" fill="#9bd0e8" stroke={D} />
      {pencil}
    </g>
  ),
  aim: (
    <g fill="none" stroke="#2c6a92" strokeWidth="1.200">
      <circle cx="10" cy="10" r="7.500" />
      <circle cx="10" cy="10" r="4" />
      <path d="M10 0v20M0 10h20" />
    </g>
  ),
  prompt: (
    <g>
      <rect width="20" height="20" rx="1.500" fill="#242424" />
      <path d="M4 5l5 5-5 5M10 16h6" fill="none" stroke="#fff" strokeWidth="1.600" />
    </g>
  ),
};

const size: Record<number, string> = {
  18: "size-[18px] shrink-0 overflow-visible",
  20: "size-5 shrink-0 overflow-visible",
};

function Ic({ n, s = 18 }: { n: string; s?: number }) {
  return (
    <svg viewBox="0 0 20 20" className={size[s]} aria-hidden="true">
      {icons[n]}
    </svg>
  );
}

function Caret({ dim = false }: { dim?: boolean }) {
  return (
    <svg viewBox="0 0 6 4" className="h-[3px] w-[5px] shrink-0" aria-hidden="true">
      <path d="M0 0h6L3 4z" fill={dim ? "#9a9a9a" : "#333"} />
    </svg>
  );
}

function Menu({ label, w = "w-[21px]", dim }: { label: string; w?: string; dim?: boolean }) {
  return (
    <button aria-label={label} className={`flex h-8 items-center justify-center ${w}`}>
      <Caret dim={dim} />
    </button>
  );
}

function TitleBtn({ n, label }: { n: string; label: string }) {
  return (
    <button aria-label={label} className="flex h-8 w-[26px] items-center justify-center">
      <Ic n={n} s={20} />
    </button>
  );
}

function TitleBar() {
  const win = [
    ["user", "Account"],
    ["help", "Help"],
    ["min", "Minimize"],
    ["span", "Span displays"],
    ["restore", "Restore"],
    ["close", "Close"],
  ];
  return (
    <header className="flex h-[39px] shrink-0 items-center border-b border-[#bdbdbd]">
      <div className="flex w-[146px] items-center pl-1">
        <svg viewBox="0 0 22 22" className="size-[22px]" aria-hidden="true" fill="none" stroke="#d8291f" strokeWidth="1.600">
          <path d="M4 2c4-2 7-1 5 1.500C8 5 6 6 4 7.500M4 9c6-1 8 1 5 5-2 3-5 4.500-8 5 3-2 5-4 6-8" />
          <path d="M20.500 8.500c-6-1-8 0-6 3 2 4 3 6.500-3.500 6.500" strokeWidth="2.200" />
        </svg>
        <span className="ml-1 text-sm italic text-[#d8291f]">
          <b>SOLID</b>WORKS
        </span>
      </div>
      <nav className="flex items-center gap-4 pt-1">
        {["File", "Edit", "View", "Insert", "Tools", "Window"].map((m) => (
          <button key={m}>{m}</button>
        ))}
      </nav>
      <button aria-label="Pin menu" className="ml-3 mr-1">
        <svg viewBox="0 0 20 20" className="size-3.5" aria-hidden="true">{icons.pin}</svg>
      </button>
      <div className="flex h-full items-center border-l border-[#bdbdbd] pl-[22px]">
        <TitleBtn n="home" label="Home" />
        <span className="w-[7px]" />
        {[
          ["newdoc", "New"],
          ["open", "Open"],
          ["save", "Save"],
          ["print", "Print"],
          ["undo", "Undo"],
        ].map(([n, l]) => (
          <div key={n} className="flex">
            <TitleBtn n={n} label={l} />
            <Menu label={`${l} options`} dim={n === "undo"} />
          </div>
        ))}
        <TitleBtn n="redo" label="Redo" />
        <Menu label="Redo options" w="w-[18px]" />
        <button aria-label="Select" className="flex h-[33px] w-[33px] items-center justify-center border border-[#666] bg-[#b0b0b0]">
          <Ic n="pointer" s={20} />
        </button>
        <button aria-label="Select options" className="flex h-[33px] w-[13px] items-center justify-center border border-l-0 border-[#999]">
          <Caret />
        </button>
        <div className="ml-1 flex gap-[7px]">
          <TitleBtn n="light" label="Rebuild" />
          <TitleBtn n="list" label="File properties" />
          <TitleBtn n="gear" label="Options" />
        </div>
        <Menu label="More options" />
      </div>
      <h1 className="flex-1 pr-1 pt-0.5 text-center">2_2_Sarah_Britos *</h1>
      <label className="flex h-[29px] w-[252px] shrink-0 items-center border border-[#bdbdbd] bg-white px-1.5">
        <Ic n="prompt" />
        <input aria-label="Search commands" defaultValue="adva" className="ml-2 w-full min-w-0 bg-transparent text-[#555] outline-none" />
        <Ic n="search" />
        <span className="w-3" />
        <Caret dim />
      </label>
      <div className="-mr-3 ml-[3px] flex text-[#444]">
        {win.map(([n, l]) => (
          <button key={n} aria-label={l} className="flex w-[41px] shrink-0 justify-center">
            <Ic n={n} s={20} />
          </button>
        ))}
      </div>
    </header>
  );
}

function Big({ n, text, w, menu }: { n: string; text: string; w: string; menu?: boolean }) {
  return (
    <button className={`flex h-[78px] flex-col items-center pt-1.5 ${w}`}>
      <Ic n={n} />
      <span className="mt-[3px] whitespace-pre leading-[19px]">{text}</span>
      {menu && (
        <span className="mt-auto pb-2">
          <Caret />
        </span>
      )}
    </button>
  );
}

function Small({ items, w }: { items: [string, string][]; w: string }) {
  return (
    <div className={`flex flex-col pt-px ${w}`}>
      {items.map(([n, t]) => (
        <button key={t} className="flex h-[26px] items-center gap-[7px] whitespace-nowrap">
          <Ic n={n} />
          {t}
        </button>
      ))}
    </div>
  );
}

function Ribbon() {
  return (
    <div className="flex h-[82px] shrink-0 border-b border-[#858585] pb-0.5 pt-px">
      <div className="flex border-r border-[#c4c4c4] pl-1.5">
        <Big n="extrude" text={"Extruded\nBoss/Base"} w="w-[70px]" />
        <Big n="revolve" text={"Revolved\nBoss/Base"} w="w-[72px]" />
        <Small w="w-[163px] pl-[3px]" items={[["sweep", "Swept Boss/Base"], ["loft", "Lofted Boss/Base"], ["boundary", "Boundary Boss/Base"]]} />
      </div>
      <div className="flex border-r border-[#c4c4c4]">
        <Big n="cut" text={"Extruded\nCut"} w="w-[66px]" />
        <Big n="hole" text="Hole Wizard" w="w-[80px]" menu />
        <Big n="revcut" text={"Revolved\nCut"} w="w-[70px]" />
        <Small w="w-[122px] pl-px" items={[["sweepcut", "Swept Cut"], ["loftcut", "Lofted Cut"], ["boundarycut", "Boundary Cut"]]} />
      </div>
      <div className="flex border-r border-[#c4c4c4]">
        <Big n="fillet" text="Fillet" w="w-[40px]" menu />
        <Big n="pattern" text="Linear Pattern" w="w-[96px]" menu />
        <Small w="w-[70px] pl-0.5" items={[["rib", "Rib"], ["draft", "Draft"], ["shell", "Shell"]]} />
        <Small w="w-[90px] pl-px" items={[["wrap", "Wrap"], ["intersect", "Intersect"], ["mirror", "Mirror"]]} />
      </div>
      <div className="flex border-r border-[#c4c4c4]">
        <Big n="refgeo" text="Referenc..." w="w-[71px]" menu />
        <Big n="curves" text="Curves" w="w-[54px]" menu />
      </div>
      <button className="flex w-[72px] flex-col items-center border border-[#5e5e5e] bg-[#b0b0b0] pt-[5px]">
        <Ic n="instant" />
        <span className="mt-[3px] leading-[19px]">Instant3D</span>
      </button>
      <button aria-label="Collapse ribbon" className="-mr-0.5 mb-1 ml-auto self-end">
        <svg viewBox="0 0 12 12" className="size-3" aria-hidden="true">
          <path d="M1.500 8.500L6 4l4.500 4.500" fill="none" stroke="#222" strokeWidth="2" />
        </svg>
      </button>
    </div>
  );
}

const commandTabs = ["Sketch", "Markup", "Evaluate", "MBD Dimensions", "SOLIDWORKS Add-Ins", "MBD", "SOLIDWORKS CAM", "SOLIDWORKS CAM TBM"];
const commandWidths = ["w-[62px]", "w-[70px]", "w-[74px]", "w-[136px]", "w-[173px]", "w-[56px]", "w-[157px]", "w-[189px]"];

function CommandTabs() {
  return (
    <div role="tablist" className="absolute left-0 top-0 z-10 flex h-7 text-sm text-[#222]">
      <button role="tab" aria-selected className="w-[79px] border-b border-[#808080] bg-[#f7f7f7] font-bold">Features</button>
      {commandTabs.map((t, i) => (
        <button role="tab" key={t} className={`whitespace-nowrap border-b border-l border-[#808080] bg-[#d4d4d4] last:border-r ${commandWidths[i]}`}>
          {t}
        </button>
      ))}
    </div>
  );
}

function Strip({ items, className }: { items: string[]; className: string }) {
  return (
    <div className={`self-start border-b border-[#858585] pb-[7px] ${className}`}>
      <div className="flex h-[13px] px-1 pt-0.5">
        <div className="h-0.5 flex-1 border-t-2 border-dotted border-[#8f8f8f]" />
      </div>
      {items.map((it, i) => {
        if (it === "-") {
          return (
            <div key={i} className="h-2 pl-[5px] pt-0.5">
              <div className="h-px w-11 bg-[#858585]" />
            </div>
          );
        }
        const [n, caret] = it.split("|");
        return (
          <div key={i} className="flex h-[26px] items-center">
            <button aria-label={n} className="ml-[7px]">
              <Ic n={n} />
            </button>
            {caret && (
              <button aria-label={`${n} options`} className="ml-3.5">
                <Caret dim={caret === "dim"} />
              </button>
            )}
          </div>
        );
      })}
    </div>
  );
}

const strip1 = ["plane3", "axis", "coord", "point", "com", "bbox", "mate"];
const strip2 = [
  "dim|v", "dimgray", "-", "spell", "brush", "-", "noteA", "aaa|dim", "balloon", "balloongray", "finish", "weld", "gtol", "datum", "target",
  "hole2", "rev", "hatch", "block|v", "-", "center", "cline", "-", "table|v",
];
const strip3 = [
  "autodim", "datumblue", "sizedim", "locdim", "angdim", "gtolblue", "patfeat", "centgray", "showtol", "target", "finish", "weld", "noteA",
  "dim", "table|v", "-", "cam3d", "section", "breakv", "modelitem", "annview", "-", "pdf", "pdfgray", "edraw", "step", "dimhelp",
];

const tree: [string, string, boolean][] = [
  ["fhist", "History {历史记录}", true],
  ["fsens", "Sensors {传感器}", false],
  ["fann", "Annotations {注解}", true],
  ["fsolid", "Solid Bodies(27) {实体}", true],
  ["material", "Material <not specified>", false],
  ["plane", "Front Plane", false],
  ["plane", "Top Plane", false],
  ["plane", "Right Plane", false],
  ["origin", "Origin {原点}", false],
  ["sketch", "Sketch1 {草图1}", true],
  ["extrude", "Boss-Extrude1 {凸台-拉伸1}", true],
  ["cut", "Cut-Extrude1 {切除-拉伸1}", true],
  ["cut", "Cut-Extrude2 {切除-拉伸2}", true],
  ["extrude", "Boss-Extrude3 {凸台-拉伸3}", true],
  ...Array.from({ length: 16 }, (_, i): [string, string, boolean] => ["fillet", `Fillet${i + 1} {圆角${i + 1}}`, false]),
];

function FeaturePanel() {
  const tabs = ["props", "config", "crosshair", "ball"];
  return (
    <section className="flex w-[273px] shrink-0 flex-col border-l border-r border-l-[#b4b4b4] border-r-[#8a8a8a] pt-7">
      <div className="mr-0.5 flex h-[25px] items-center justify-center border-b border-t border-b-[#bdbdbd] border-t-[#8fb0b8]">
        <span className="size-1.5 rounded-full border border-[#999] bg-[#ddd]" />
      </div>
      <div className="mr-0.5 mt-1 flex h-[26px]">
        <button aria-label="Feature tree" className="flex w-10 items-center justify-center border-t border-[#858585]">
          <Ic n="part" />
        </button>
        {tabs.map((t) => (
          <button key={t} aria-label={t} className="flex w-10 items-center justify-center border border-r-0 border-[#858585] bg-[#d4d4d4]">
            <Ic n={t} />
          </button>
        ))}
        <button aria-label="Display pane" className="flex flex-1 items-center overflow-hidden border border-r-0 border-[#858585] bg-[#d4d4d4] pl-2.5">
          <Ic n="cubeblue" />
        </button>
        <button aria-label="Previous tab" className="flex w-[22px] items-center justify-center border border-[#ccc] bg-white">
          <svg viewBox="0 0 5 8" className="h-2 w-[5px]" aria-hidden="true"><path d="M5 0v8L0 4z" /></svg>
        </button>
        <button aria-label="Next tab" className="flex w-[22px] items-center justify-center border border-l-0 border-[#ccc] bg-white">
          <svg viewBox="0 0 5 8" className="h-2 w-[5px]" aria-hidden="true"><path d="M0 0v8l5-4z" /></svg>
        </button>
      </div>
      <label className="ml-1 mr-[5px] mt-px flex h-[31px] items-center border border-[#bdbdbd] pl-0.5">
        <Ic n="funnel" />
        <input aria-label="Filter features" className="min-w-0 flex-1 bg-transparent outline-none" />
      </label>
      <div className="flex min-h-0 flex-1">
        <ul className="min-w-0 flex-1 overflow-hidden whitespace-nowrap text-sm">
          <li className="flex h-6 items-center pl-1">
            <Ic n="part" />
            <span className="w-[5px] shrink-0" />
            <Ic n="cap" />
            <span className="ml-[5px]">2_2_Sarah_Britos (Default) &lt;&lt;Default</span>
          </li>
          {tree.map(([n, t, exp]) => (
            <li key={t} className="flex h-6 items-center pl-[9px]">
              <span className="w-[17px] shrink-0">
                {exp && (
                  <svg viewBox="0 0 5 7" className="h-[7px] w-1" aria-hidden="true"><path d="M0 0v7l5-3.500z" fill="#555" /></svg>
                )}
              </span>
              <Ic n={n} />
              <span className="ml-[5px]">{t}</span>
            </li>
          ))}
        </ul>
        <div className="mr-0.5 w-[19px] bg-[#efefef] pl-2 pt-[21px]">
          <div className="h-[52%] w-[3px] rounded-full bg-[#858585]" />
        </div>
      </div>
      <div className="mr-0.5 h-[21px] border-t border-white bg-[#efefef] pl-[21px] pt-2">
        <div className="h-[3px] w-[129px] rounded-full bg-[#858585]" />
      </div>
      <div className="mt-px h-1 border-b border-t border-[#bdbdbd]" />
    </section>
  );
}

type Key = [number, number, number, number];
const ovalCols: [number, number][] = [[136, 334], [381, 585], [622, 825], [869, 1069], [1115, 1312]];
const ovals: Key[] = [
  [136, 551, 198, 105],
  ...ovalCols.map(([a, b]): Key => [a, 701, b - a, 107]),
  ...[856, 1009, 1159].flatMap((y) => ovalCols.slice(0, 2).map(([a, b]): Key => [a, y, b - a, 108])),
];
const squares: Key[] = [
  [136, 1314, 198, 245],
  [391, 1314, 194, 245],
  ...([[856, 145], [1045, 142], [1228, 145], [1416, 143]] as [number, number][]).flatMap(([y, h]) =>
    ([[631, 176], [868, 184], [1115, 184]] as [number, number][]).map(([x, w]): Key => [x, y, w, h]),
  ),
];

function Calculator() {
  return (
    <svg viewBox="0 0 1470 1680" className="absolute left-[489px] top-[149px] h-[560px] w-[490px]" role="img" aria-label="Calculator model, back view" strokeWidth="3">
      <path
        d="M45 160C48 120 75 90 120 83C350 48 520 36 707 36C920 36 1130 52 1335 83C1375 90 1408 130 1410 165L1405 630L1395 1510C1395 1600 1320 1658 1250 1658H200C120 1658 62 1600 60 1510L50 513Z"
        fill="#2f6630"
        stroke="#000"
        strokeWidth="4"
      />
      <path d="M70 513L84 1510C84 1580 140 1635 205 1636H1250C1320 1632 1370 1580 1372 1510L1383 627" fill="none" stroke="#21461f" />
      <path d="M50 512H275C360 520 470 610 572 627H1403L1397 610H575L280 502H57Z" fill="#245129" />
      <path
        d="M57 502V165C60 120 85 98 115 93C350 58 500 46 707 46C950 46 1150 65 1340 93C1375 100 1398 135 1399 170L1397 616H575C480 600 370 510 280 502Z"
        fill="#245129"
        stroke="#000"
        strokeWidth="4"
      />
      <path d="M50 512H275C360 520 470 610 572 627H1403" fill="none" stroke="#000" strokeWidth="4" />
      <rect x="151" y="172" width="1156" height="212" rx="8" fill="#306731" stroke="#000" strokeWidth="4" />
      <rect x="940" y="487" width="333" height="112" rx="7" fill="#306731" stroke="#000" strokeWidth="4" />
      {ovals.map(([x, y, w, h]) => (
        <g key={`${x}-${y}`}>
          <rect x={x - 21} y={y - 21} width={w + 42} height={h + 42} rx="64" fill="none" stroke="#21461f" />
          <rect x={x} y={y} width={w} height={h} rx="46" fill="#25562a" stroke="#000" strokeWidth="4" />
        </g>
      ))}
      {squares.map(([x, y, w, h]) => (
        <g key={`${x}-${y}`}>
          <rect x={x - 21} y={y - 21} width={w + 42} height={h + 42} rx="30" fill="none" stroke="#21461f" />
          <rect x={x} y={y} width={w} height={h} rx="9" fill="#25562a" stroke="#000" strokeWidth="4" />
        </g>
      ))}
    </svg>
  );
}

const hud: [string, boolean][] = [
  ["zoomfit", false], ["zoomarea", false], ["prevview", false], ["section", false], ["annview", false], ["orient", true],
  ["display", true], ["eye", true], ["appear", false], ["scene", true], ["monitor", true],
];

function Canvas() {
  return (
    <section
      className="relative min-w-0 flex-1 overflow-hidden border-b border-[#858585] bg-white bg-[radial-gradient(ellipse_600px_340px_at_100%_100%,#eff0f6,transparent),radial-gradient(ellipse_420px_280px_at_100%_0%,#f3f4f7_15%,transparent),linear-gradient(180deg,rgba(255,255,255,0)_53%,rgba(255,255,255,0.600)_61%,#ffffff_69%),linear-gradient(163deg,#ffffff_19%,#f5f6f9_29%,#e5e9f1_39%,#dadde9_56%,#dadde9_100%)]"
    >
      <div className="absolute inset-x-0 top-[33px] flex justify-center pr-1">
        {hud.map(([n, c]) => (
          <div key={n} className="flex h-5 items-center">
            <button aria-label={n} className="flex w-[26px] justify-center opacity-80">
              <Ic n={n} />
            </button>
            {c && (
              <button aria-label={`${n} options`} className="flex w-3.5 justify-center">
                <Caret dim />
              </button>
            )}
          </div>
        ))}
      </div>
      <div className="absolute right-[5px] top-[5px] flex text-[#9a9a9a]">
        {["prevdoc", "nextdoc", "min", "restore", "close"].map((n) => (
          <button key={n} aria-label={`${n} document`} className="flex w-[26px] justify-center">
            <Ic n={n} s={20} />
          </button>
        ))}
      </div>
      <Calculator />
      <div className="absolute right-0 top-[57px] w-8 border-l border-t border-[#858585]">
        {["home", "library", "folderbig", "palette", "ball", "props"].map((n) => (
          <button key={n} aria-label={`${n} pane`} className={`flex h-[30px] w-full items-center justify-center border-b border-[#858585] ${n === "ball" ? "bg-[#f7f7f7]" : "bg-[#d4d4d4]"}`}>
            <Ic n={n} s={n === "ball" ? 18 : 20} />
          </button>
        ))}
      </div>
      <svg viewBox="0 0 60 70" className="absolute bottom-[51px] left-1 h-[70px] w-[60px] overflow-visible" aria-label="Axis triad">
        <circle cx="47" cy="54" r="5" fill="#dcdcff" />
        <path d="M43 58h7M43 47h4" stroke="#00f" />
        <path d="M44 51V26h-3l6-11 6 11h-3v27z" fill="#1d6b1d" stroke="#0c3f0c" strokeWidth="0.800" />
        <path d="M47 52V26" stroke="#7fc77f" strokeWidth="2" />
        <path d="M47 57H21v3L10 54l11-6v3h26z" fill="#c81e1e" stroke="#6d0d0d" strokeWidth="0.800" />
        <path d="M47 54H21" stroke="#f08a8a" strokeWidth="2" />
        <path d="M44 1l3 5 3-5M47 6v5" fill="none" stroke="#0a8a0a" />
        <path d="M2 48l7 10M9 48L2 58" fill="none" stroke="#e00" />
      </svg>
      <p className="absolute bottom-0 left-[11px] font-['Lato'] text-xl leading-6 text-[#111]">*Back</p>
    </section>
  );
}

function BottomTabs() {
  const nav = ["M3 1v10M11 1v10L5 6z", "M9 1v10L3 6z", "M3 1v10l6-5z", "M2 1v10l6-5zM10 1v10"];
  return (
    <div className="flex h-[17px] shrink-0 overflow-hidden border-l border-[#b4b4b4] text-[15px] leading-5">
      <div className="flex border-t border-[#111] pl-0.5">
        {nav.map((d, i) => (
          <button key={d} aria-label={`Tab navigation ${i + 1}`} className="flex w-5 justify-center border-r border-[#8285a0] bg-[#a9abc3] pt-0.5">
            <svg viewBox="0 0 12 12" className="size-3" aria-hidden="true"><path d={d} fill="#7c7f9b" stroke="#7c7f9b" /></svg>
          </button>
        ))}
      </div>
      <button className="w-[76px] bg-white font-bold">Model</button>
      <button className="w-[90px] border-l border-t border-[#858585] bg-[#d4d4d4]">3D Views</button>
      <button className="w-[144px] border-l border-r border-t border-[#858585] bg-[#d4d4d4] pr-3">Motion Study 1</button>
    </div>
  );
}

export default function App() {
  return (
    <div className="flex h-screen flex-col overflow-hidden bg-[#f7f7f7] font-['Noto_Sans','Noto_Sans_CJK_SC',sans-serif] text-[13px] text-black">
      <TitleBar />
      <Ribbon />
      <main className="relative flex min-h-0 flex-1">
        <CommandTabs />
        <div className="flex w-[138px] shrink-0 pt-7">
          <Strip items={strip1} className="w-[33px]" />
          <Strip items={strip2} className="w-[53px] border-l" />
          <Strip items={strip3} className="w-[50px] border-l" />
        </div>
        <div className="flex min-w-0 flex-1 flex-col">
          <div className="relative flex min-h-0 flex-1">
            <FeaturePanel />
            <Canvas />
            <button aria-label="Collapse panel" className="absolute left-[272px] top-[409px] flex h-12 w-3 items-center justify-center border border-l-0 border-[#858585] bg-[#f7f7f7]">
              <span className="size-1.5 rounded-full border border-[#999] bg-[#ddd]" />
            </button>
          </div>
          <BottomTabs />
        </div>
        <aside className="w-[25px] shrink-0 overflow-hidden">
          <div className="h-[177px] w-[38px] border-b border-[#858585] pl-1 pt-0.5">
            <div className="mb-[9px] w-8 border-t-2 border-dotted border-[#8f8f8f]" />
            {["appear", "ballgray", "clipgray", "scene", "dbedit", "aim"].map((n) => (
              <button key={n} aria-label={n} className="flex h-[26px] items-center pl-1">
                <Ic n={n} s={20} />
              </button>
            ))}
          </div>
        </aside>
      </main>
    </div>
  );
}
